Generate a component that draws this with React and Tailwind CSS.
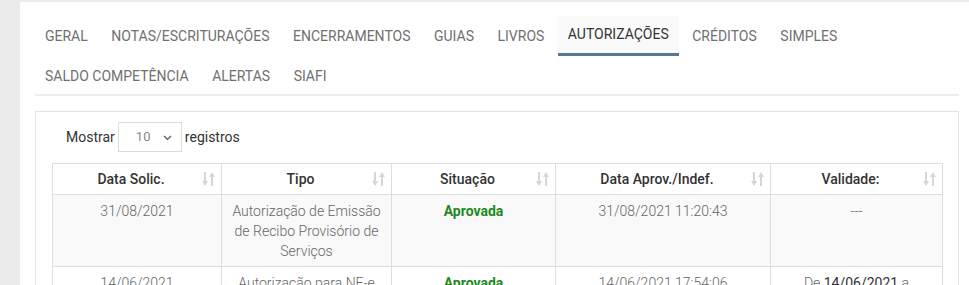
import React from "react";

const tabs = [
  "GERAL",
  "NOTAS/ESCRITURAÇÕES",
  "ENCERRAMENTOS",
  "GUIAS",
  "LIVROS",
  "AUTORIZAÇÕES",
  "CRÉDITOS",
  "SIMPLES",
  "SALDO COMPETÊNCIA",
  "ALERTAS",
  "SIAFI",
];

const cols = [
  { label: "Data Solic.", w: "w-[169px]" },
  { label: "Tipo", w: "w-[170px]" },
  { label: "Situação", w: "w-[164px]" },
  { label: "Data Aprov./Indef.", w: "w-[215px]" },
  { label: "Validade:", w: "w-[172px]" },
];

const rows = [
  {
    data: "31/08/2021",
    tipo: "Autorização de Emissão de Recibo Provisório de Serviços",
    situacao: "Aprovada",
    aprov: "31/08/2021 11:20:43",
    validade: null,
  },
  {
    data: "14/06/2021",
    tipo: "Autorização para NF-e",
    situacao: "Aprovada",
    aprov: "14/06/2021 17:54:06",
    validade: ["14/06/2021", "14/06/2022"],
  },
];

function SortIcon() {
  return (
    <svg width="13" height="14" viewBox="0 0 13 14" className="shrink-0">
      <g fill="#d6d6d6">
        <rect x="2" y="0" width="2" height="10" />
        <polygon points="0,9 6,9 3,14" />
        <rect x="9" y="4" width="2" height="10" />
        <polygon points="7,5 13,5 10,0" />
      </g>
    </svg>
  );
}

export default function App() {
  return (
    <div className="h-screen overflow-hidden bg-[#ebebeb] pl-[20px] font-['Roboto',sans-serif]">
      <div className="mt-[2px] h-full bg-white pl-[15px] pr-[10px] pt-[14px]">
        {/* Tabs */}
        <div className="flex flex-wrap text-[14px]">
          {tabs.map((t) => (
            <div
              key={t}
              className={`h-[40px] px-[10px] mr-[3.5px] flex items-center box-border ${
                t === "AUTORIZAÇÕES"
                  ? "bg-[#fafafa] text-[#333] border-b-[3px] border-[#52799a]"
                  : "text-[#707070]"
              }`}
            >
              {t}
            </div>
          ))}
        </div>
        <div className="-mt-[2px] border-b-2 border-[#ededed]" />

        {/* Card */}
        <div className="mt-[15px] border border-[#e3e3e3] px-[16px] pt-[10px]">
          <div className="ml-[14px] flex items-center gap-[3px] text-[14px] text-[#333]">
            <span>Mostrar</span>
            <div className="relative h-[30px] w-[64px] border border-[#dcdcdc] flex items-center pl-[17px] text-[13px] text-[#888]">
              10
              <svg
                width="9"
                height="6"
                viewBox="0 0 9 6"
                className="absolute right-[9px] top-[12px]"
              >
                <polyline points="1,1 4.5,4.5 8,1" fill="none" stroke="#555" strokeWidth="1.2" />
              </svg>
            </div>
            <span>registros</span>
          </div>

          <table className="mt-[11px] w-[890px] table-fixed border-collapse text-[14px]">
            <thead>
              <tr>
                {cols.map((c) => (
                  <th
                    key={c.label}
                    className={`${c.w} h-[31px] border border-[#dedede] font-medium text-[#333] pl-[7px] pr-[6px]`}
                  >
                    <div className="flex items-center">
                      <span className="flex-1 text-center">{c.label}</span>
                      <SortIcon />
                    </div>
                  </th>
                ))}
              </tr>
            </thead>
            <tbody className="font-light text-[#666] leading-[20px]">
              {rows.map((r, i) => (
                <tr key={i} className={i % 2 === 0 ? "bg-[#f9f9f9]" : "bg-white"}>
                  <td className="border border-[#dedede] text-center align-top px-[8px] pt-[6px] pb-[5px]">
                    {r.data}
                  </td>
                  <td className="border border-[#dedede] text-center align-top px-[8px] pt-[6px] pb-[5px]">
                    {r.tipo}
                  </td>
                  <td className="border border-[#dedede] text-center align-top px-[8px] pt-[6px] pb-[5px] font-bold text-[#1e8a1e]">
                    {r.situacao}
                  </td>
                  <td className="border border-[#dedede] text-center align-top px-[8px] pt-[6px] pb-[5px]">
                    {r.aprov}
                  </td>
                  <td className="border border-[#dedede] text-center align-top px-[8px] pt-[6px] pb-[5px]">
                    {r.validade ? (
                      <>
                        De <span className="font-normal text-[#333]">{r.validade[0]}</span> a{" "}
                        <span className="font-normal text-[#333]">{r.validade[1]}</span>
                      </>
                    ) : (
                      "---"
                    )}
                  </td>
                </tr>
              ))}
            </tbody>
          </table>
        </div>
      </div>
    </div>
  );
}
